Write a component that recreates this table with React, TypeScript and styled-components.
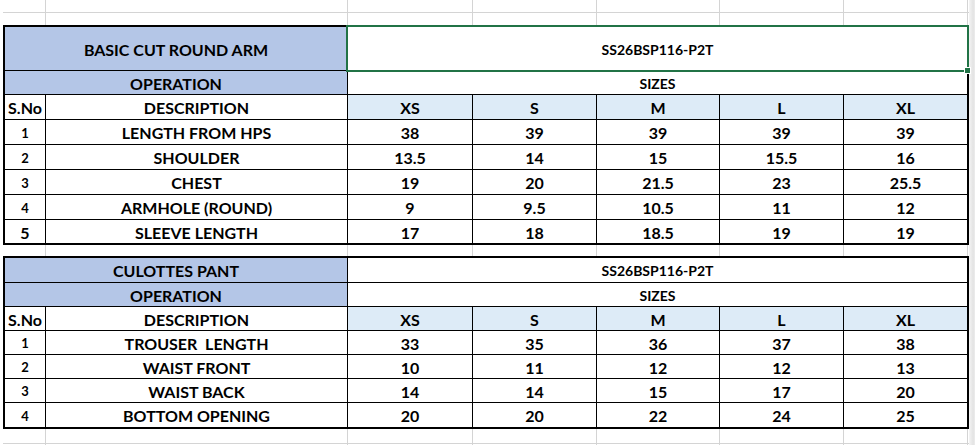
import React from 'react';
import styled, { createGlobalStyle } from 'styled-components';

interface MeasureRow {
  no: string;
  name: string;
  values: string[];
  bigNo?: boolean;
}

interface SpecTable {
  title: string;
  style: string;
  rowTemplate: string;
  tall?: boolean;
  rows: MeasureRow[];
}

const SIZES = ['XS', 'S', 'M', 'L', 'XL'];

// column widths of the sheet, gridline included on the right edge
const SHEET_COLS = '43px 302px 125px 124px 123px 124px 124px';
// column widths inside a bordered table (1px black gap between cells)
const TABLE_COLS = '40px 301px 124px 123px 122px 123px 123px';

const tables: SpecTable[] = [
  {
    title: 'BASIC CUT ROUND ARM',
    style: 'SS26BSP116-P2T',
    rowTemplate: '43px 23px 24px 24px 24px 24px 24px 23px',
    tall: true,
    rows: [
      { no: '1', name: 'LENGTH FROM HPS', values: ['38', '39', '39', '39', '39'] },
      { no: '2', name: 'SHOULDER', values: ['13.5', '14', '15', '15.5', '16'] },
      { no: '3', name: 'CHEST', values: ['19', '20', '21.5', '23', '25.5'] },
      { no: '4', name: 'ARMHOLE (ROUND)', values: ['9', '9.5', '10.5', '11', '12'] },
      { no: '5', name: 'SLEEVE LENGTH', values: ['17', '18', '18.5', '19', '19'], bigNo: true },
    ],
  },
  {
    title: 'CULOTTES PANT',
    style: 'SS26BSP116-P2T',
    rowTemplate: '24px 23px 23px 23px 23px 23px 24px',
    rows: [
      { no: '1', name: 'TROUSER  LENGTH', values: ['33', '35', '36', '37', '38'] },
      { no: '2', name: 'WAIST FRONT', values: ['10', '11', '12', '12', '13'] },
      { no: '3', name: 'WAIST BACK', values: ['14', '14', '15', '17', '20'] },
      { no: '4', name: 'BOTTOM OPENING', values: ['20', '20', '22', '24', '25'] },
    ],
  },
];

const GlobalStyle = createGlobalStyle`
  html, body {
    margin: 0;
    padding: 0;
    background: #fff;
  }
  body {
    font-family: Lato, "Liberation Sans", sans-serif;
    color: #000;
  }
`;

const Page = styled.div`
  display: flex;
  width: 975px;
  height: 445px;
  overflow: hidden;
  background: #fff;
`;

const Sheet = styled.div`
  flex: 0 0 966px;
  margin-left: 3px;
  display: flex;
  flex-direction: column;
  & > * {
    flex-shrink: 0;
  }
`;

// window edge at the right of the sheet
const EdgeStrip = styled.div`
  flex: 1;
  background: linear-gradient(to right, #f4f4f4, #e3e3e3 70%, #ededed);
`;

const GridRow = styled.div<{ $h: number; $line?: boolean }>`
  display: grid;
  grid-template-columns: ${SHEET_COLS};
  height: ${(p) => p.$h}px;
  border-bottom: ${(p) => (p.$line ? '1px solid #d4d4d4' : 'none')};
  box-sizing: border-box;
`;

const GridCell = styled.div`
  border-right: 1px solid #d4d4d4;
`;

const Table = styled.div<{ $rows: string }>`
  display: grid;
  grid-template-columns: ${TABLE_COLS};
  grid-template-rows: ${(p) => p.$rows};
  gap: 1px;
  padding: 2px;
  background: #000;
`;

const Cell = styled.div<{ $tone?: 'title' | 'size'; $span?: number; $size?: number }>`
  grid-column: span ${(p) => p.$span ?? 1};
  display: flex;
  align-items: center;
  justify-content: center;
  padding-top: 1px;
  background: ${(p) =>
    p.$tone === 'title' ? '#b4c6e7' : p.$tone === 'size' ? '#ddebf7' : '#fff'};
  font-size: ${(p) => p.$size ?? 16}px;
  font-weight: 700;
  white-space: pre;
  position: relative;
`;

// the active cell outline Excel draws over the sheet
const Selection = styled.div`
  position: absolute;
  inset: -2px;
  z-index: 2;
  border: 2px solid #217346;
  pointer-events: none;

  &::after {
    content: '';
    position: absolute;
    right: -4px;
    bottom: -4px;
    width: 5px;
    height: 5px;
    background: #217346;
    border: 1px solid #fff;
  }
`;

const EmptyRow: React.FC<{ h: number; line?: boolean }> = ({ h, line }) => (
  <GridRow $h={h} $line={line}>
    {Array.from({ length: 7 }).map((_, i) => (
      <GridCell key={i} />
    ))}
  </GridRow>
);

const Spec: React.FC<{ table: SpecTable }> = ({ table }) => (
  <Table $rows={table.rowTemplate}>
    <Cell $tone="title" $span={2}>{table.title}</Cell>
    <Cell $span={5} $size={14}>
      {table.style}
      {table.tall && <Selection />}
    </Cell>
    <Cell $tone="title" $span={2}>OPERATION</Cell>
    <Cell $span={5} $size={14}>SIZES</Cell>
    <Cell>S.No</Cell>
    <Cell>DESCRIPTION</Cell>
    {SIZES.map((s) => (
      <Cell key={s} $tone="size">{s}</Cell>
    ))}
    {table.rows.map((r) => (
      <React.Fragment key={r.no}>
        <Cell $size={r.bigNo ? 16 : 13}>{r.no}</Cell>
        <Cell>{r.name}</Cell>
        {r.values.map((v, i) => (
          <Cell key={i}>{v}</Cell>
        ))}
      </React.Fragment>
    ))}
  </Table>
);

export default function App() {
  return (
    <>
      <GlobalStyle />
      <Page>
        <Sheet>
          <EmptyRow h={13} line />
          <EmptyRow h={12} />
          <Spec table={tables[0]} />
          <EmptyRow h={11} />
          <Spec table={tables[1]} />
          <EmptyRow h={15} line />
          <EmptyRow h={20} />
        </Sheet>
        <EdgeStrip />
      </Page>
    </>
  );
}
